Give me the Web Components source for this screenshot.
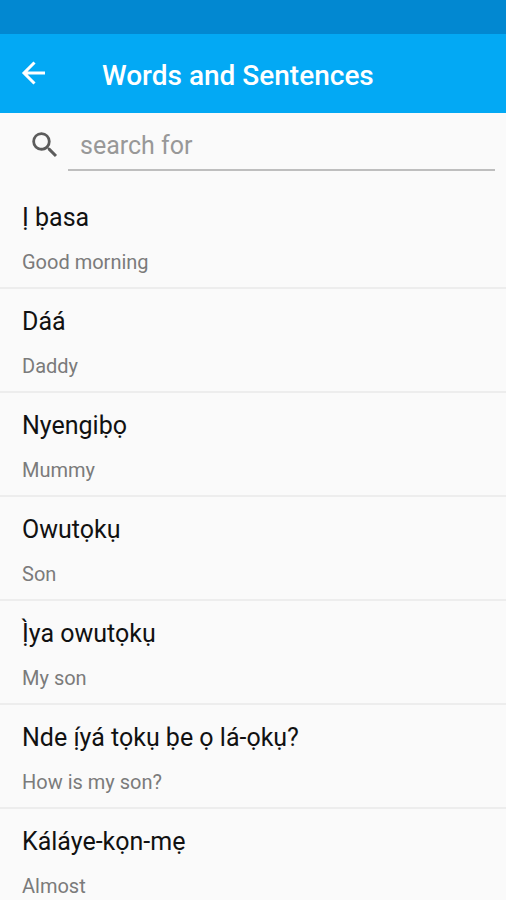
<!DOCTYPE html>
<html lang="en">
<head>
<meta charset="utf-8">
<meta name="viewport" content="width=device-width, initial-scale=1">
<title>Words and Sentences</title>
<style>
html, body { height: 100%; margin: 0; }
body { background: #fafafa; color: #111; font-family: Roboto, "Noto Sans", sans-serif; overflow: hidden; }
</style>
</head>
<body>
<phrase-app>
  <app-bar slot="header">Words and Sentences</app-bar>
  <search-field slot="search" placeholder="search for"></search-field>
  <phrase-item>Ị ḅasa<span slot="meaning">Good morning</span></phrase-item>
  <phrase-item>Dáá<span slot="meaning">Daddy</span></phrase-item>
  <phrase-item>Nyengiḅọ<span slot="meaning">Mummy</span></phrase-item>
  <phrase-item>Owutọkụ<span slot="meaning">Son</span></phrase-item>
  <phrase-item>Ị̀ya owutọkụ<span slot="meaning">My son</span></phrase-item>
  <phrase-item>Nde ị́yá tọkụ ḅe ọ lá-ọkụ?<span slot="meaning">How is my son?</span></phrase-item>
  <phrase-item>Káláye-kọn-mẹ<span slot="meaning">Almost</span></phrase-item>
</phrase-app>
<script>
class BaseElement extends HTMLElement {
  constructor() {
    super();
    this.attachShadow({ mode: "open" }).innerHTML = this.constructor.markup;
  }
}

class PhraseApp extends BaseElement {
  static markup = `
    <style>
      :host { display: flex; flex-direction: column; height: 100%; }
      main { flex: 1; min-height: 0; display: flex; flex-direction: column; }
      .list { flex: 1; min-height: 0; overflow-y: auto; scrollbar-width: none; }
    </style>
    <slot name="header"></slot>
    <main>
      <slot name="search"></slot>
      <div class="list" role="list"><slot></slot></div>
    </main>`;
}

class AppBar extends BaseElement {
  static markup = `
    <style>
      :host { display: block; flex: none; background: #03a9f4; color: #fff; }
      .status { height: 34px; background: #0288d1; }
      header { display: flex; align-items: center; gap: 48px; height: 79px; padding: 0 14px; }
      button { display: flex; padding: 0 0 2px; border: 0; background: none; color: inherit; cursor: pointer; }
      h1 { margin: 0; padding-top: 4px; font-size: 28px; line-height: 36px; font-weight: 500; }
      svg { width: 40px; height: 36px; }
    </style>
    <div class="status"></div>
    <header>
      <button type="button" aria-label="Back">
        <svg viewBox="0 0 40 36" fill="none" stroke="currentColor" stroke-width="3"><path d="M31 18H10M20.500 7.500 10 18l10.500 10.500"/></svg>
      </button>
      <h1><slot></slot></h1>
    </header>`;
}

class SearchField extends BaseElement {
  static markup = `
    <style>
      :host { display: block; flex: none; }
      label { display: flex; align-items: center; height: 72px; padding: 0 11px 2px 28px; box-sizing: border-box; }
      svg { flex: none; width: 34px; height: 34px; margin: 0 6px 6px 0; fill: #5c5c5c; }
      input { flex: 1; min-width: 0; height: 46px; margin: 0; padding: 0 12px 4px; box-sizing: border-box;
        border: 0; border-bottom: 2px solid #bebebe; border-radius: 0; outline: 0; background: none;
        color: #111; font: 25px/32px Roboto, "Noto Sans", sans-serif; }
      input::placeholder { color: #989898; opacity: 1; }
    </style>
    <label>
      <svg viewBox="0 0 24 24" aria-hidden="true"><path d="M15.500 14h-.79l-.28-.27A6.471 6.471 0 0 0 16 9.500 6.500 6.500 0 1 0 9.500 16c1.610 0 3.090-.59 4.230-1.570l.27.28v.79l5 4.990L20.490 19l-4.990-5zm-6 0C7.010 14 5 11.990 5 9.500S7.010 5 9.500 5 14 7.010 14 9.500 11.990 14 9.500 14z"/></svg>
      <input type="text" aria-label="Search">
    </label>`;
  connectedCallback() {
    this.shadowRoot.querySelector("input").placeholder = this.getAttribute("placeholder") || "";
  }
}

class PhraseItem extends BaseElement {
  static markup = `
    <style>
      :host { display: flex; flex-direction: column; gap: 12px; height: 104px; padding: 17px 22px 0;
        box-sizing: border-box; border-bottom: 2px solid #ededed; }
      .word { font-size: 25px; line-height: 32px; }
      .meaning { color: #7b7b7b; font-size: 20px; line-height: 32px; }
    </style>
    <div class="word"><slot></slot></div>
    <div class="meaning"><slot name="meaning"></slot></div>`;
  connectedCallback() { this.setAttribute("role", "listitem"); }
}

customElements.define("phrase-app", PhraseApp);
customElements.define("app-bar", AppBar);
customElements.define("search-field", SearchField);
customElements.define("phrase-item", PhraseItem);
</script>
</body>
</html>
